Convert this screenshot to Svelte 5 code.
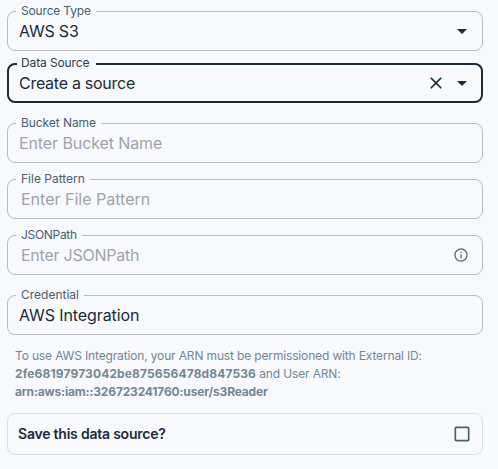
<script>
  const fields = [
    { label: 'Source Type', value: 'AWS S3', arrow: true, notch: 80, gap: 12, ls: -0.2, lls: -0.17 },
    { label: 'Data Source', value: 'Create a source', arrow: true, clear: true, focused: true, notch: 79, gap: 20, ls: -0.27, lls: -0.12 },
    { label: 'Bucket Name', hint: 'Enter Bucket Name', notch: 85, gap: 16, ls: -0.1, lls: -0.07 },
    { label: 'File Pattern', hint: 'Enter File Pattern', inset: true, notch: 74, gap: 16, ls: 0, lls: 0 },
    { label: 'JSONPath', hint: 'Enter JSONPath', info: true, inset: true, notch: 66, gap: 20, ls: -0.25, lls: -0.3 },
    { label: 'Credential', value: 'AWS Integration', notch: 68, gap: 0, ls: -0.1, lls: 0 }
  ];
</script>

<main>
  {#each fields as f}
    <div class="field" class:focused={f.focused} style="margin-bottom: {f.gap}px">
      <span class="label" style="width: {f.notch}px; letter-spacing: {f.lls}px">{f.label}</span>
      <span class="value" class:hint={f.hint} class:inset={f.inset} style="letter-spacing: {f.ls}px">{f.value ?? f.hint}</span>
      {#if f.clear}
        <svg class="clear" width="20" height="20" viewBox="0 0 24 24"><path d="M19 6.41 17.59 5 12 10.59 6.41 5 5 6.41 10.59 12 5 17.59 6.41 19 12 13.41 17.59 19 19 17.59 13.41 12z" /></svg>
      {/if}
      {#if f.arrow}
        <svg width="24" height="24" viewBox="0 0 24 24"><path d="m7 10 5 5 5-5z" /></svg>
      {/if}
      {#if f.info}
        <svg class="info" width="16" height="16" viewBox="0 0 24 24"><path d="M11 7h2v2h-2zm0 4h2v6h-2zm1-9C6.48 2 2 6.48 2 12s4.48 10 10 10 10-4.480 10-10S17.520 2 12 2m0 18c-4.410 0-8-3.590-8-8s3.590-8 8-8 8 3.590 8 8-3.590 8-8 8" /></svg>
      {/if}
    </div>
  {/each}

  <div class="note">
    <div class="l1">To use AWS Integration, your ARN must be permissioned with External ID:</div>
    <div class="l2"><b>2fe68197973042be875656478d847536</b> <span>and User ARN:</span></div>
    <div class="l3"><b>arn:aws:iam::326723241760:user/s3Reader</b></div>
  </div>

  <div class="save">
    <span>Save this data source?</span>
    <svg width="20" height="20" viewBox="0 0 24 24"><path d="M19 5v14H5V5zm0-2H5c-1.100 0-2 .9-2 2v14c0 1.100.9 2 2 2h14c1.100 0 2-.9 2-2V5c0-1.100-.9-2-2-2" /></svg>
  </div>
</main>

<style>
  :global(body) {
    background: #f7f9fd;
  }
  main {
    box-sizing: border-box;
    height: 469px;
    padding: 11px 15px 0 7px;
    font-family: Inter, 'Liberation Sans', sans-serif;
    color: #1c2b36;
    background: #f7f9fd;
    overflow: hidden;
  }
  .field {
    position: relative;
    box-sizing: border-box;
    height: 40px;
    display: flex;
    align-items: center;
    padding: 0 8px 0 11px;
    border: 1px solid #babdc2;
    border-radius: 8px;
  }
  .focused {
    border: 2px solid #1c2b36;
    padding: 0 7px 0 10px;
  }
  .label {
    position: absolute;
    left: 8px;
    top: -8px;
    box-sizing: border-box;
    padding-left: 5px;
    font-size: 12px;
    line-height: 14px;
    white-space: nowrap;
    color: #49606f;
    background: #f7f9fd;
  }
  .focused .label {
    top: -9px;
    left: 8px;
    padding-left: 4px;
    color: #2b3c48;
  }
  .value {
    flex: 1;
    font-size: 16px;
    line-height: 24px;
    white-space: nowrap;
  }
  .hint {
    color: #a0a4a9;
  }
  .inset {
    padding-left: 2px;
  }
  svg {
    display: block;
    flex: none;
    fill: #1c2b36;
  }
  .clear {
    margin-right: 4px;
  }
  .info {
    margin-right: 5px;
    fill: #5a6e7c;
  }
  .note {
    padding: 12px 0 0 8px;
    font-size: 12px;
    line-height: 18px;
    letter-spacing: -0.15px;
    color: #748792;
    white-space: nowrap;
  }
  .note b {
    font-weight: 700;
  }
  .l2 b {
    letter-spacing: 0.13px;
  }
  .l3 b {
    letter-spacing: -0.17px;
  }
  .save {
    box-sizing: border-box;
    height: 42px;
    margin-top: 12px;
    display: flex;
    align-items: center;
    justify-content: space-between;
    padding: 0 10px;
    border: 1px solid #dddfe3;
    border-radius: 8px;
    font-size: 14px;
    font-weight: 600;
    letter-spacing: -0.22px;
  }
  .save span {
    position: relative;
    top: -1px;
  }
  .save svg {
    fill: #49606f;
  }
</style>
